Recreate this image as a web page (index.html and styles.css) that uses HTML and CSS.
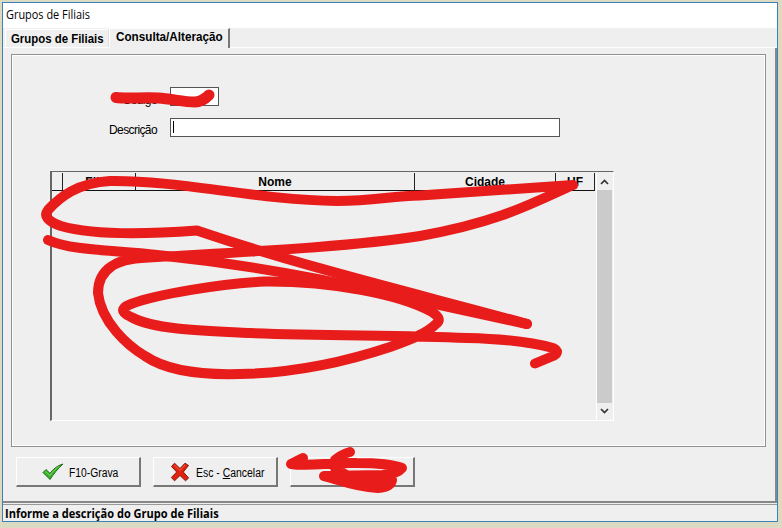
FILE: index.html
```html
<!DOCTYPE html>
<html lang="pt-BR">
<head>
<meta charset="utf-8">
<title>Grupos de Filiais</title>
<link rel="stylesheet" href="styles.css">
</head>
<body>
<div class="window">
  <header class="titlebar"><span class="title-text">Grupos de Filiais</span></header>
  <nav class="tabs">
    <div class="tab"><span class="tab-text first">Grupos de Filiais</span></div>
    <div class="tab active"><span class="tab-text">Consulta/Alteração</span></div>
  </nav>
  <main class="page">
    <section class="panel">
      <div class="field code"><label class="label">Código</label><div class="input short"></div></div>
      <div class="field"><label class="label">Descrição</label><div class="input long"><i class="caret"></i></div></div>
      <div class="grid">
        <div class="columns">
          <div class="cell"></div>
          <div class="cell">Filial</div>
          <div class="cell">Nome</div>
          <div class="cell">Cidade</div>
          <div class="cell">UF</div>
        </div>
        <div class="scrollbar">
          <svg class="arrow" viewBox="0 0 15 17"><path d="M4 11 7.5 7.5 11 11"/></svg>
          <div class="thumb"></div>
          <svg class="arrow" viewBox="0 0 15 17"><path d="M4 6 7.5 9.5 11 6"/></svg>
        </div>
      </div>
    </section>
    <div class="buttons">
      <button class="button">
        <svg class="icon check" viewBox="0 0 22 18"><path d="M1 9.500 4 6.500 8 10.400C11 6 15.500 2.500 21 1 15.500 6 11.500 11 8 16.500Z" fill="#37b52a" stroke="#28651f" stroke-width="1"/><path d="M3.500 8.500 8 12.500C11 8 14 5 17 3.500" fill="none" stroke="#75d957" stroke-width="1"/></svg>
        <span class="grava">F10-Grava</span>
      </button>
      <button class="button">
        <svg class="icon cross" viewBox="0 0 20 20"><path d="M1.500 4.500 4.500 1.200 10 6.500 15 1.200 18.500 3.500 13.300 10 18.600 16 15.500 18.800 10 13.500 4.500 18.800 1.400 15.500 6.700 10Z" fill="#e4210e" stroke="#7d1c10" stroke-width="1"/><path d="M4.500 3 10 8.500 15 3" fill="none" stroke="#fa6048" stroke-width="1"/></svg>
        <span class="cancelar">Esc - <u>C</u>ancelar</span>
      </button>
      <button class="button"></button>
    </div>
  </main>
  <footer class="status"><span class="status-text">Informe a descrição do Grupo de Filiais</span></footer>
</div>
<svg class="marker" viewBox="0 0 782 528">
  <path d="M116 97.500C127 99 145 97 158 98C172 99 184 102 195 102Q202 102 209 95"/>
  <path d="M527 324C430 297 310 269 197 230.500C150 234 95 236 61 226Q41 219 48 210C60 197 77 183 110 181C180 180 255 200 337 201C375 201 390 196 420 195.500L573 185C535 202 500 222 420 236C350 247 240 252 157 257C137 258 122 259 112 266Q98 275 98 293C101 322 128 346 145 356C167 371 205 375 240 374C295 373 345 362 390 347C412 339 427 333 436 324Q443 319 432 312C400 294 330 281 265 281.500C220 284 158 294 131 304Q115 310 131 317C155 330 205 331 250 333C330 336 400 335 467 338C510 339 535 343 553 348Q561 352 553 356L535 363.500"/>
  <path d="M48 240C72 251 115 250 157 255C225 262 310 276 385 293L527 324"/>
  <path d="M345 281C385 291 410 297 432 302"/>
  <path d="M303 458 291 464C310 467 330 462 357 463C372 463 391 464 402 468Q397 474 383 475L324 476C342 480 350 486 378 488Q391 487 392 480L380 477L355 480L340 472M335 460Q342 454 350 452M335 468 349 477M350 479H386"/>
</svg>
</body>
</html>
```

FILE: styles.css
```css
* { box-sizing: border-box; }
body { margin: 0; width: 782px; height: 528px; padding: 2px 4px 6px 2px; overflow: hidden; background: #dcdac2; color: #000; font: 12px "Liberation Sans", Arial, sans-serif; }
.window { height: 520px; border: 1px solid #3c82b4; background: #efefef; display: flex; flex-direction: column; }
.titlebar { height: 26px; background: #fff; padding: 3px 0 0 3px; line-height: 18px; font-family: "Open Sans", sans-serif; }
span { display: inline-block; white-space: nowrap; }
.title-text { transform-origin: left; transform: scaleX(.91); }
.tabs { height: 20px; display: flex; align-items: flex-end; padding-left: 2px; border-bottom: 1px solid #fff; flex: none; }
.tab { width: 104px; height: 18px; border: 1px solid #fff; border-bottom: 0; border-right-color: #ddd; padding: 2px 0 0 5px; font-weight: bold; line-height: 15px; }
.tab.active { width: 121px; height: 20px; margin-bottom: -1px; border-right: 2px solid #777; background: #efefef; padding: 1px 0 0 6px; }
.tab-text { font-size: 12px; transform-origin: left; transform: scaleX(.975); }
.tab-text.first { transform: scaleX(.95); }
.page { height: 455px; border: solid #888; border-width: 0 2px 2px 0; padding: 6px 9px 0 8px; flex: none; }
.panel { height: 393px; border: 1px solid #919191; box-shadow: inset 0 0 0 1px #fff; padding: 32px 0 0 38px; }
.field { display: flex; align-items: flex-start; height: 31px; }
.label { width: 120px; padding: 5px 13px 0 0; text-align: right; line-height: 14px; letter-spacing: -.6px; }
.input { height: 19px; border: 1px solid #555; background: #fff; }
.short { width: 49px; }
.long { width: 390px; padding: 2px; }
.caret { display: block; width: 1px; height: 12px; background: #000; }
.grid { margin-top: 22px; width: 564px; height: 250px; display: flex; justify-content: space-between; border: 1px solid #666; border-left-width: 2px; border-right-color: #fff; border-bottom-color: #fff; padding: 1px 1px 0 0; }
.columns { height: 18px; display: grid; grid-template-columns: 11px 73px 279px 141px 39px; font-weight: bold; line-height: 19px; text-align: center; }
.cell { height: 18px; border-right: 1px solid #222; border-bottom: 1px solid #111; }
.scrollbar { width: 16px; display: flex; flex-direction: column; border-left: 1px solid #fff; }
.arrow { width: 15px; height: 17px; fill: none; stroke: #333; stroke-width: 1.7; }
.thumb { flex: 1; background: #cbcbcb; }
.buttons { display: flex; gap: 12px; padding: 10px 0 0 5px; }
.button { width: 125px; height: 30px; display: flex; align-items: center; border: 1px solid #fff; border-right: 2px solid #777; border-bottom: 2px solid #777; border-radius: 0; background: #efefef; padding: 0; font: 12px "Liberation Sans", Arial, sans-serif; color: #000; }
.icon { flex: none; }
.check { width: 22px; height: 18px; margin-left: 25px; }
.cross { width: 20px; height: 20px; margin-left: 16px; }
.grava { margin: 2px 0 0 5px; transform-origin: left; transform: scaleX(.86); }
.cancelar { margin: 2px 0 0 6px; transform-origin: left; transform: scaleX(.87); }
.status { height: 17px; margin-top: 1px; border-top: 1px solid #999; padding-left: 2px; font: bold 12px/18px "Open Sans", sans-serif; }
.status-text { transform-origin: left; transform: scaleX(.92); }
.code .label { padding-top: 6px; }
.marker { position: absolute; left: 0; top: 0; width: 782px; height: 528px; fill: none; stroke: #e71c1b; stroke-width: 10; stroke-linecap: round; stroke-linejoin: round; pointer-events: none; }
.marker path:first-child { stroke-width: 11; }
```
